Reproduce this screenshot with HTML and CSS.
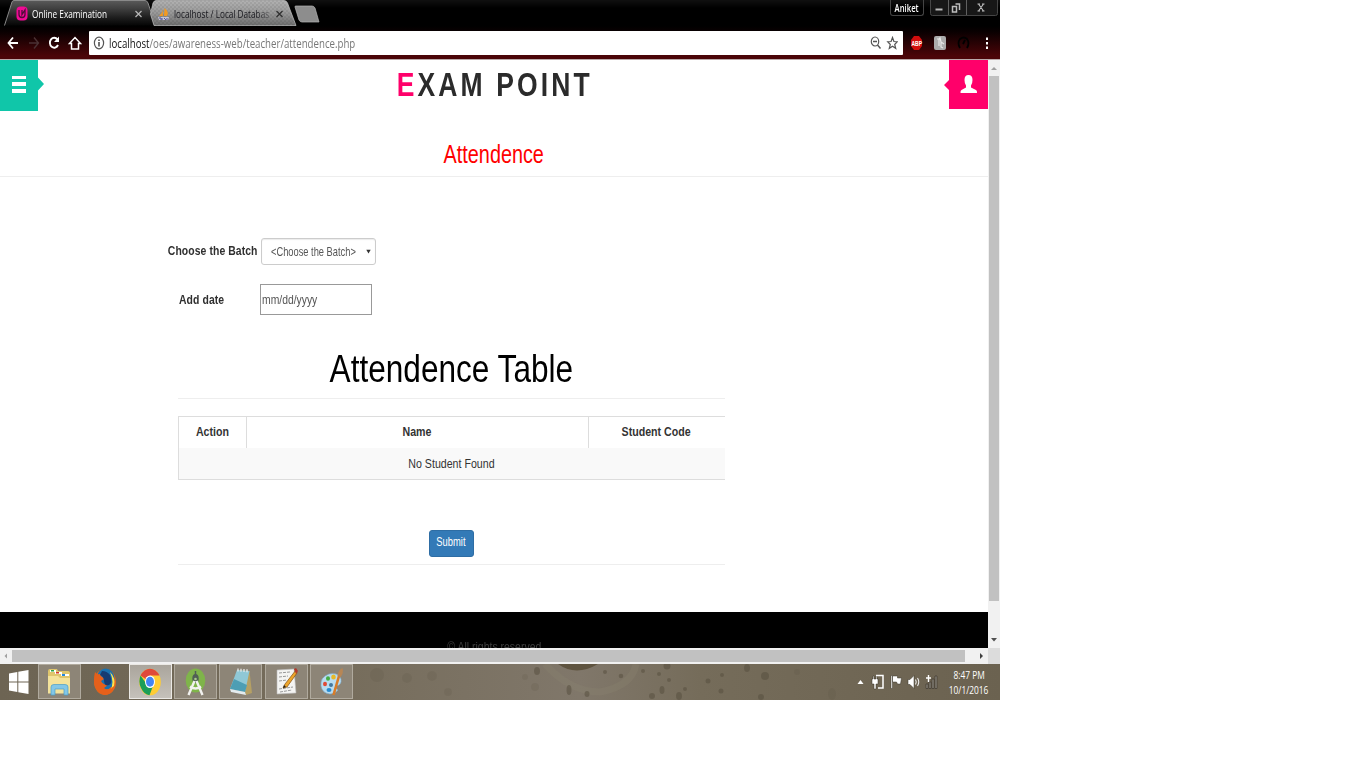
FILE: index.html
```html
<!DOCTYPE html>
<html lang="en">
<head>
<meta charset="utf-8">
<title>Online Examination</title>
<link rel="stylesheet" href="styles.css">
</head>
<body>
<div class="screen">
  <header class="chrome">
    <div class="tabstrip">
      <svg class="tab-art" width="330" height="27" viewBox="0 0 330 27">
        <defs>
          <linearGradient id="g1" x1="0" y1="0" x2="0" y2="1"><stop offset="0" stop-color="#5a5a5a"/><stop offset=".3" stop-color="#424242"/><stop offset=".7" stop-color="#1c1c1c"/><stop offset="1" stop-color="#050505"/></linearGradient>
          <linearGradient id="g2" x1="0" y1="0" x2="0" y2="1"><stop offset="0" stop-color="#b2b2b2"/><stop offset=".5" stop-color="#989898"/><stop offset="1" stop-color="#6e6e6e"/></linearGradient>
          <pattern id="weave" width="4" height="4" patternUnits="userSpaceOnUse"><path d="M0 0h2v2h-2zM2 2h2v2h-2z" fill="#000" opacity=".07"/></pattern>
        </defs>
        <path d="M5 25.500 12 2Q12.500.5 14 .5H145Q147 .5 148 3L155 25.500z" fill="url(#g1)"/>
        <path d="M4.500 25.500 12 2Q12.500.5 14 .5H145Q147 .5 148 3L151 12" fill="none" stroke="#8a8a8a"/>
        <path d="M154 25.500 150.500 14 153 3Q154 .5 156 .5H284Q286.500.5 287.500 3L296 25.500z" fill="url(#g2)" stroke="#c5c5c5" stroke-width=".7"/>
        <path d="M154 25.500 150.500 14 153 3Q154 .5 156 .5H284L296 25.500z" fill="url(#weave)"/>
        <path d="M295 7Q294.500 6 296 6H312Q314 6 315 8L319 22H302Q300 22 299 20z" fill="#8d8d8d" stroke="#b5b5b5" stroke-width=".7"/>
      </svg>
      <div class="tab tab-one">
        <svg width="12" height="16" viewBox="0 0 12 16"><rect x=".5" y=".5" width="11" height="14" rx="4" fill="#f00a94"/><path d="M3 4v4.500q0 3 3 3t3-3V4L6 8.500V4" fill="none" stroke="#4b0d38" stroke-width="1.300"/></svg>
        <span class="tab-title">Online Examination</span>
        <svg class="x" width="7" height="8" viewBox="0 0 7 8"><path d="M.5 1l6 6M6.500 1l-6 6" stroke="#b5b5b5" stroke-width="1.300"/></svg>
      </div>
      <div class="tab tab-two">
        <svg width="13" height="15" viewBox="0 0 13 15"><path d="M5.500 1q1 5-3.500 9h4zM7.500 2q5 4 2.500 8h-3z" fill="#f29a22"/><path d="M1 11h11l-1 3H2z" fill="#c5c5d2"/><path d="M2 12h2v2M5 12v2M7 12l2 2M10 12v2" stroke="#51559a" fill="none"/></svg>
        <span class="tab-title faded">localhost / Local Databas</span>
        <svg class="x" width="7" height="8" viewBox="0 0 7 8"><path d="M.5 1l6 6M6.500 1l-6 6" stroke="#303030" stroke-width="1.300"/></svg>
      </div>
      <div class="user"><span>Aniket</span></div>
      <div class="winbtns">
        <svg width="68" height="16" viewBox="0 0 68 16"><rect x=".5" y="-2" width="67" height="17.500" rx="2" fill="#171717" stroke="#454545"/><path d="M18.500 0v15M36.500 0v15" stroke="#606060"/><path d="M5.500 8.500h7v2h-7z" fill="#b9b9b9"/><path d="M25.500 4h4v6M22.500 6.500h4v5.500h-4z" fill="none" stroke="#bebebe" stroke-width="1.500"/><path d="M48.500 4l5 7M53.500 4l-5 7M47.500 4h2.500M52 4h2.500M47.500 11h2.500M52 11h2.500" stroke="#bebebe" stroke-width="1.100"/></svg>
      </div>
    </div>
    <div class="toolbar">
      <svg class="nav" width="88" height="24" viewBox="0 0 88 24" fill="none">
        <path d="M8.500 12H18M13 6.500 8.500 12 13 17.500" stroke="#fff" stroke-width="1.800"/>
        <path d="M29 12h9M34 6.500 38.500 12 34 17.500" stroke="#4a3133" stroke-width="1.400"/>
        <path d="M57.500 8.500A4.300 5 0 1 0 58 14" stroke="#fff" stroke-width="1.900"/><path d="M59 5.500V11h-5z" fill="#fff"/>
        <path d="M69.500 12.500 75 6.500l5.500 6h-2V18h-7v-5.500z" stroke="#fff" stroke-width="1.500"/>
      </svg>
      <div class="omnibox">
        <svg width="12" height="14" viewBox="0 0 12 14"><ellipse cx="6" cy="7" rx="4.600" ry="5.800" fill="none" stroke="#555" stroke-width="1.200"/><path d="M6 6v4.500M6 3.500V5" stroke="#444" stroke-width="1.500"/></svg>
        <span class="url"><b>localhost</b>/oes/awareness-web/teacher/attendence.php</span>
        <svg width="28" height="14" viewBox="0 0 28 14" fill="none" stroke="#555"><ellipse cx="5" cy="5.500" rx="3.700" ry="4.500" stroke-width="1.200"/><path d="M3 5.500h4M7.500 9l3 3.500" stroke-width="1.400"/><path d="M22.500 1.500 23.900 5.500 27.300 5.700 24.700 8.500 25.700 12.300 22.500 10.200 19.300 12.300 20.300 8.500 17.700 5.700 21.100 5.500z" stroke-width="1.200"/></svg>
      </div>
      <svg class="exts" width="97" height="24" viewBox="0 0 97 24">
        <path d="M11 5h5l3 4v6l-3 4h-5l-3-4V9z" fill="#d30d0d"/><text x="8.500" y="15" class="abp" textLength="10.500" lengthAdjust="spacingAndGlyphs">ABP</text>
        <rect x="31" y="5" width="12" height="14" rx="2" fill="#acacac"/><path d="M34 8h2l1-1 1 4 3 2M36 8v7M38 11v5l2 1" stroke="#e8e8e8" fill="none" stroke-width="1.200"/>
        <path d="M57 17q-3-5 0-9 4-3 7 0 3 4 0 9M60 13l2-4" stroke="#000" fill="none" stroke-width="1.800"/>
        <path d="M83 6.500h2v2.500h-2zM83 11h2v2.500h-2zM83 15.500h2V18h-2z" fill="#fff"/>
      </svg>
    </div>
  </header>

  <div class="view">
    <main class="page">
      <div class="masthead">
        <svg width="44" height="51" viewBox="0 0 44 51"><path d="M0 0h38v17.500l6 6.500-6 6.500V51H0z" fill="#10c6a9"/><path d="M12 16h14v3H12zM12 22h14v4H12zM12 29h14v4H12z" fill="#fff"/></svg>
        <div class="brand"><span><i>E</i>XAM POINT</span></div>
        <svg width="44" height="51" viewBox="0 0 44 51"><path d="M5 0h39v49H5V30L0 25l5-5z" fill="#ff006a"/><path d="M24.500 15q4 0 4 5 0 3.500-1.500 5.500v2l5 2.500q1.200.5 1 3H16.500q-.2-2.500 1-3l4.500-2.500v-2q-1.500-2-1.500-5.500 0-5 4-5z" fill="#fff"/></svg>
      </div>
      <h2 class="heading"><span>Attendence</span></h2>
      <form class="fields">
        <div class="field batch"><label>Choose the Batch</label><div class="select"><span>&lt;Choose the Batch&gt;</span><svg width="5" height="5" viewBox="0 0 5 5"><path d="M.3 .8h4.400L2.500 4.600z" fill="#333"/></svg></div></div>
        <div class="field date"><label>Add date</label><div class="input"><span>mm/dd/yyyy</span></div></div>
      </form>
      <section class="register">
        <h1><span>Attendence Table</span></h1>
        <div class="grid">
          <div class="row head"><div><span class="action">Action</span></div><div><span>Name</span></div><div><span>Student Code</span></div></div>
          <div class="row empty"><span>No Student Found</span></div>
        </div>
        <div class="submit-row"><button class="submit"><span>Submit</span></button></div>
      </section>
      <footer class="footer"><span>© All rights reserved</span></footer>
    </main>
    <div class="vscroll">
      <svg width="12" height="16" viewBox="0 0 12 16"><path d="M3 10 6 7l3 3z" fill="#a0a0a0"/></svg>
      <div class="vthumb"></div>
      <svg width="12" height="16" viewBox="0 0 12 16"><path d="M3 6h6L6 9.500z" fill="#505050"/></svg>
    </div>
  </div>
  <div class="hscroll">
    <svg width="12" height="16" viewBox="0 0 12 16"><path d="M7 5.500v5L4.500 8z" fill="#a0a0a0"/></svg>
    <div class="hthumb"></div>
    <svg width="23" height="16" viewBox="0 0 23 16"><path d="M15 5v6l3-3z" fill="#404040"/></svg>
    <div class="corner"></div>
  </div>

  <div class="taskbar">
    <svg class="wall" width="1000" height="36" viewBox="0 0 1000 36">
      <path d="M545 0q25 28 55 28 32-6 36-28" fill="none" stroke="#8c8370" stroke-width="7" opacity=".3"/>
      <path d="M558 0q18 13 40 0z" fill="#5f5440"/>
      <g fill="#554d3d" opacity=".5"><ellipse cx="537" cy="7" rx="3" ry="4"/><ellipse cx="569" cy="26" rx="2.500" ry="5"/><ellipse cx="587" cy="30" rx="2.500" ry="3"/><circle cx="605" cy="8" r="2"/><circle cx="621" cy="12" r="2.300"/><circle cx="643" cy="7" r="2"/><ellipse cx="662" cy="26" rx="2.500" ry="4"/><circle cx="667" cy="2" r="3.500"/><circle cx="659" cy="10" r="2"/><circle cx="669" cy="16" r="2"/><circle cx="685" cy="25" r="2"/><ellipse cx="679" cy="32" rx="3" ry="4"/><circle cx="652" cy="32" r="3"/><circle cx="708" cy="17" r="2.500"/><circle cx="722" cy="11" r="2"/><ellipse cx="747" cy="4" rx="3" ry="4"/><ellipse cx="765" cy="12" rx="4" ry="4"/><circle cx="721" cy="27" r="2.500"/><circle cx="761" cy="33" r="3"/></g>
      <g fill="#554d3d" opacity=".14"><circle cx="377" cy="11" r="7"/><circle cx="407" cy="14" r="5"/><circle cx="432" cy="12" r="5"/><circle cx="448" cy="28" r="4"/><circle cx="535" cy="23" r="4"/><circle cx="525" cy="13" r="3"/><ellipse cx="832" cy="30" rx="4" ry="6"/><circle cx="797" cy="8" r="3"/></g>
    </svg>
    <div class="task start"><svg width="20" height="24" viewBox="0 0 20 24"><path d="M0 3.500 8.300 2v9.400H0zM9.300 1.800 19.500 0v11.400H9.300zM0 12.500h8.300V22L0 20.500zM9.300 12.500h10.200V24L9.300 22.200z" fill="#fff"/></svg></div>
    <div class="task box"><svg width="25" height="28" viewBox="0 0 25 28"><path d="M1 3q0-2 2-2h7l1 2h10q2 0 2 2v20H1z" fill="#dfc66d"/><path d="M3 2h6v2H3zM8 4h7v2H8zM14 6h8v2h-8z" fill="#fff"/><path d="M4 2h3v1.500H4z" fill="#29a347"/><path d="M9 4h3v1.500H9z" fill="#d93b2b"/><path d="M15 6h3v2h-3z" fill="#2389e0"/><path d="M1 8h10l2 2h10v15.500H1z" fill="#f4e39b"/><path d="M4 27V19q0-2.500 3-2.500h11q3 0 3 2.500v8h-4v-6H8v6z" fill="#83c7e7" stroke="#4b9dc7" stroke-width=".7"/></svg></div>
    <div class="task"><svg width="24" height="28" viewBox="0 0 24 28"><ellipse cx="12" cy="14" rx="11" ry="13" fill="#e2661d"/><ellipse cx="12.500" cy="11" rx="9" ry="10.500" fill="#1971b0"/><path d="M17 4q6 6 4 14l-4 5q5-8 0-19z" fill="#ffe34b"/><path d="M2 4q-2 8 0 14 3 8 10 9 8-1 9-9-5 6-10 2l4-3q-5 0-7-4l5-3Q8 10 7 6 4 7 2 4z" fill="#e5601b"/><path d="M9 3q5 0 8 4 3 8-1 10-5 2-5-5Q10 8 7 7z" fill="#163b72"/></svg></div>
    <div class="task box live"><svg width="22" height="28" viewBox="0 0 22 28"><ellipse cx="11" cy="14" rx="10.800" ry="13.300" fill="#ffcd33"/><path d="M11 14 1.500 7.500Q5 .7 11 .7t9.500 6.800H11z" fill="#df493a"/><path d="M1.500 7.500Q-1 14 2 20q3 6.500 8.500 7.300L14 18l-5 0z" fill="#1b9e58"/><ellipse cx="11" cy="13.700" rx="5" ry="6.300" fill="#fff"/><ellipse cx="11" cy="13.700" rx="4" ry="5" fill="#4285f4"/></svg></div>
    <div class="task box"><svg width="21" height="28" viewBox="0 0 21 28"><ellipse cx="10.500" cy="12.500" rx="9.800" ry="12" fill="#7fb44a"/><ellipse cx="10.500" cy="10.500" rx="3.200" ry="4.500" fill="#505f55"/><path d="M10.500 3v5" stroke="#505f55" stroke-width="1.500"/><circle cx="10.500" cy="11" r="1.300" fill="#a9c88c"/><path d="M9.500 13 3.500 27M11.500 13l6 14M5 18.500q5.500 4 11 0" fill="none" stroke="#f2f2ef" stroke-width="2.400"/></svg></div>
    <div class="task box"><svg width="24" height="28" viewBox="0 0 24 28"><path d="M8 2 20.500 3 23 25l-6 2z" fill="#b5a064"/><path d="M8 2 20.500 3 16 24 1 21z" fill="#8fc8d6"/><path d="M1 21 5 11l13 6-2 7z" fill="#4d9eb4"/><path d="M1 21l15 3 1 3-15-3z" fill="#e4ecee"/><path d="M9 .5v3M12 .8v3M15 1v3M18 1.300v3" stroke="#e8e8e8" stroke-width="1.300"/></svg></div>
    <div class="task box"><svg width="23" height="28" viewBox="0 0 23 28"><path d="M2 2 19 1l2 24-19 1z" fill="#f4f4f2" stroke="#bbb" stroke-width=".6"/><path d="M4 5l11-1M4 9l9-1M4 13l8-1M4 21l14-2M5 24l12-2" stroke="#999" stroke-width="1" stroke-dasharray="3 1"/><path d="M21 2 10 16l-2 4 4-1L22 5z" fill="#eda52b" stroke="#84500f" stroke-width=".7"/><path d="M19 1l2-1 2 3-2 3z" fill="#b43a2c"/><path d="M8 20l1-3 2 2z" fill="#222"/></svg></div>
    <div class="task box"><svg width="24" height="28" viewBox="0 0 24 28"><path d="M1 18Q0 9 9 6q9-2 12 5 1 6-5 7 0 3 2 4-3 4-8 4Q2 25 1 18z" fill="#b8dcf0" stroke="#7aa9c9" stroke-width=".6"/><ellipse cx="5" cy="16" rx="2" ry="2.300" fill="#e04a36"/><ellipse cx="8" cy="10.500" rx="2" ry="2.300" fill="#45ae45"/><ellipse cx="13.500" cy="9" rx="2.300" ry="2.500" fill="#e8b928"/><circle cx="11" cy="17" r="2" fill="#44789e"/><ellipse cx="9" cy="22" rx="2.500" ry="2" fill="#268bd2"/><path d="M19 8 13.500 27" stroke="#d87c28" stroke-width="2.600"/><path d="M17.500 8Q18 2 22.500 0 24 5 20.500 9z" fill="#b78655"/></svg></div>
    <div class="tray">
      <svg width="84" height="18" viewBox="0 0 84 18">
        <path d="M2.500 11 5.500 7l3 4z" fill="#fff"/>
        <g stroke="#393429" stroke-width=".5"><path d="M18 3h1v3h2V3h1v3h1v5h-2v5h-2v-5h-2V6h1z" fill="#fff"/><path d="M21 2.500h7v12.500h-5" fill="none" stroke="#fff" stroke-width="1.500"/><path d="M36 2.500h1.500v13H36zM37.500 3h5v2h4l-1 6h-3l-1-2h-4z" fill="#fff"/><path d="M53 6.500h2l4-4v13l-4-4h-2z" fill="#fff"/></g>
        <path d="M60.500 6.500q1.500 2.500 0 5M62.500 5q2.500 4 0 8" stroke="#eee" fill="none" stroke-width="1.100"/>
        <path d="M71 11h2v4.500h-2zM74 9h2v6.500h-2zM77 6h2v9.500h-2zM80 3h2v12.500h-2z" fill="#8b867b" stroke="#35312a" stroke-width=".6"/><path d="M71 5h5M73.500 2v7" stroke="#fff" stroke-width="1.400"/>
      </svg>
      <div class="clock"><span>8:47 PM</span><span>10/1/2016</span></div>
    </div>
  </div>
</div>
</body>
</html>
```
FILE: styles.css
```css
* { box-sizing: border-box; }
body { margin: 0; background: #fff; font-family: "Liberation Sans", Arial, sans-serif; overflow: hidden; }
svg { display: block; flex: none; }
span, label { white-space: nowrap; }
.screen { width: 1000px; height: 700px; display: flex; flex-direction: column; overflow: hidden; }

/* browser window */
.chrome { height: 60px; background: linear-gradient(#101010 0, #000 8px, #000 26px, #0a0001 32px, #4b0508 56px); border-bottom: 1px solid #b9a9a9; font-family: "Open Sans", "Noto Sans", sans-serif; }
.tabstrip { height: 27px; display: flex; align-items: flex-start; position: relative; }
.tab-art { position: absolute; left: 0; top: 0; }
.tab { position: relative; height: 27px; display: flex; align-items: center; font-size: 10.5px; }
.tab-one { width: 142px; padding-left: 16px; color: #fff; }
.tab-two { width: 160px; padding-left: 15px; color: #16161c; }
.tab-title { margin-left: 4px; width: 98px; transform: scaleX(.782); transform-origin: left; }
.tab-one .tab-title { width: 102px; }
.tab .x { margin-left: 1px; }
.faded { -webkit-mask-image: linear-gradient(90deg, #000 105px, rgba(0,0,0,.25) 125px); mask-image: linear-gradient(90deg, #000 105px, rgba(0,0,0,.25) 125px); }
.tab-two .faded { width: 125px; margin-right: -24px; overflow: hidden; }
.user { margin-left: auto; width: 34px; height: 16px; border: 1px solid #444; border-top: 0; border-radius: 0 0 3px 3px; color: #fff; font-size: 10px; font-weight: 600; display: flex; justify-content: center; align-items: center; margin-right: 6px; }
.user span { transform: scaleX(.77); }
.winbtns { width: 70px; }
.toolbar { height: 32px; display: flex; align-items: center; }
.nav { margin-right: 1px; }
.omnibox { width: 814px; height: 24px; background: #fff; border-radius: 1px; display: flex; align-items: center; padding: 0 5px 0 4px; }
.url { margin-left: 4px; flex: 1; font-size: 11.8px; color: #777; transform: scaleX(.82); transform-origin: left; padding-bottom: 1px; }
.url b { font-weight: 400; color: #111; }
.abp { font: bold 7.5px "Liberation Sans", sans-serif; fill: #fff; }

/* page */
.view { height: 588px; display: flex; }
.page { width: 988px; display: flex; flex-direction: column; background: #fff; }
.masthead { display: flex; justify-content: space-between; height: 51px; }
.brand { height: 48px; display: flex; align-items: center; font-size: 34px; font-weight: 700; letter-spacing: 4px; color: #2b2b2b; }
.brand span { transform: scaleX(.779); margin-left: 2px; }
.brand i { font-style: normal; color: #ff006a; }
.heading { margin: 0; height: 66px; padding-top: 21px; border-bottom: 1px solid #eee; text-align: center; color: #f00; font-weight: 400; font-size: 25px; line-height: 44px; }
.heading span { display: inline-block; transform: translateX(-.5px) scaleX(.793); }
h1 span { display: inline-block; transform: scaleX(.81); }
.fields { height: 164px; padding: 61px 0 0 167px; font-size: 12.8px; color: #2f2f2f; }
.field { display: flex; align-items: center; }
.field label { font-weight: 700; transform: scaleX(.813); transform-origin: left; letter-spacing: .1px; }
.batch { height: 27px; }
.batch label { width: 94px; padding: 0 0 2px 1px; }
.select { width: 115px; height: 27px; border: 1px solid #ccc; border-radius: 3px; display: flex; align-items: center; justify-content: space-between; padding: 0 4px 0 9px; color: #555; box-shadow: inset 0 1px 1px rgba(0,0,0,.08); }
.select span { width: 85px; transform: scaleX(.727); transform-origin: left; padding-bottom: 1px; }
.date { margin-top: 19px; height: 31px; padding-left: 12px; }
.date label { width: 81px; }
.input { width: 112px; height: 31px; border: 1px solid #999; display: flex; align-items: center; padding-left: .5px; color: #555; }
.input span { transform: scaleX(.81); transform-origin: left; }
.register { width: 547px; margin-left: 178px; height: 271px; }
h1 { margin: 0 0 17px; height: 58px; border-bottom: 1px solid #eee; font-size: 39px; line-height: 55px; font-weight: 400; color: #000; text-align: center; }
.grid { border: 1px solid #ddd; border-right: 0; height: 64px; font-size: 12.8px; color: #333; }
.row { display: flex; height: 31px; text-align: center; align-items: center; }
.row span { display: inline-block; transform: translateX(-.5px) scaleX(.83); }
.head { font-weight: 700; }
.head div { height: 31px; line-height: 30px; border-right: 1px solid #ddd; width: 342px; }
.head div:first-child { width: 68px; }
.head div:last-child { flex: 1; border: 0; }
.empty { background: #f9f9f9; justify-content: center; }
.submit-row { height: 85px; padding-top: 50px; border-bottom: 1px solid #eee; display: flex; justify-content: center; }
.submit { width: 45px; height: 27px; padding: 0 0 3px; border: 1px solid #2e6da4; border-radius: 3px; background: #337ab7; color: #fff; font: 12.5px "Liberation Sans", Arial, sans-serif; display: flex; align-items: center; justify-content: center; }
.submit span { transform: translateX(-.5px) scaleX(.75); }
.footer { height: 36px; background: #000; color: #3e3e3e; font-size: 12.8px; overflow: hidden; text-align: center; line-height: 16px; padding-top: 27px; }
.footer span { display: inline-block; transform: scaleX(.82); }
.vscroll { width: 12px; background: #f1f1f1; display: flex; flex-direction: column; justify-content: space-between; }
.vthumb { width: 10px; height: 525px; margin: 0 1px 31px; background: #c1c1c1; }
.hscroll { height: 16px; background: #f1f1f1; display: flex; }
.hthumb { width: 953px; height: 12px; margin-top: 2px; background: #c1c1c1; }
.corner { width: 12px; background: #dcdcdc; }

/* desktop taskbar */
.taskbar { height: 36px; position: relative; display: flex; background: linear-gradient(90deg, #6d6453, #766d5c 35%, #80776a 58%, #756c5a 70%, #6b6250); }
.wall { position: absolute; left: 0; top: 0; }
.task { position: relative; width: 43px; height: 35px; margin-right: 2.35px; display: flex; align-items: center; justify-content: center; border: 1px solid transparent; }
.start { width: 37px; margin-right: 1px; }
.box { background: #8d8577; border-color: #b0aa9e; }
.live { background: linear-gradient(#aaa59c, #c5c1ba); border-color: #eae8e4; }
.tray { position: relative; margin-left: auto; display: flex; align-items: center; }
.tray svg { margin-right: -2px; }
.clock { width: 63px; display: flex; flex-direction: column; align-items: center; font: 11px/15px "Open Sans", "Noto Sans", sans-serif; color: #fff; }
.clock span { transform: translateX(.5px) scaleX(.76); }
```
